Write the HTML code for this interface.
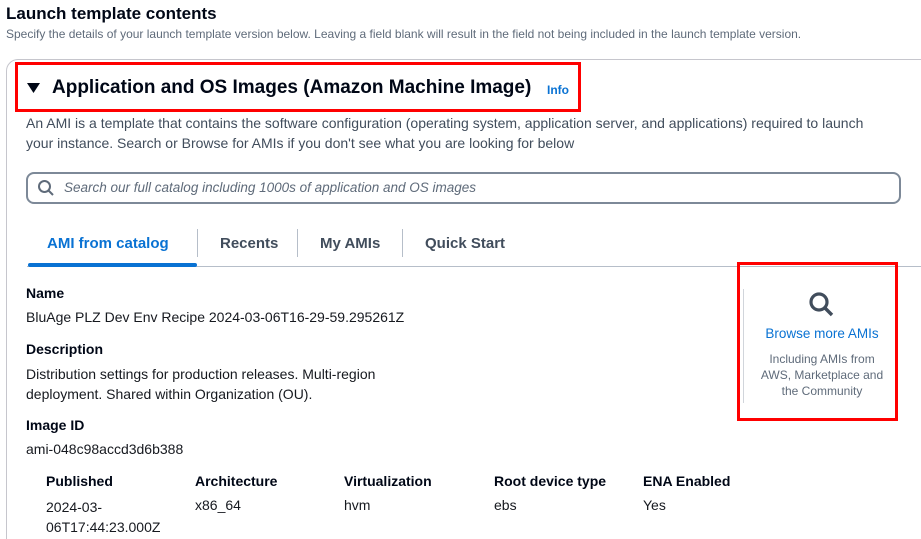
<!DOCTYPE html>
<html><head><meta charset="utf-8"><style>
*{margin:0;padding:0;box-sizing:border-box}
html,body{width:921px;height:539px;overflow:hidden}
body{background:#fff;font-family:"Liberation Sans",sans-serif;color:#000716;position:relative}
.a{position:absolute;white-space:nowrap}
.b{font-weight:bold;font-size:14px}
.v{font-size:14px;color:#16191f}
</style></head><body>
<div class="a" style="left:6px;top:4px;font-size:17px;font-weight:bold">Launch template contents</div>
<div class="a" style="left:6px;top:27px;font-size:12px;color:#5f6b7a">Specify the details of your launch template version below. Leaving a field blank will result in the field not being included in the launch template version.</div>
<div class="a" style="left:6px;top:59px;width:930px;height:500px;border:1px solid #c6c6cd;border-radius:12px"></div>
<div class="a" style="left:15px;top:62px;width:566px;height:50px;border:3px solid #ff0000"></div>
<svg class="a" style="left:27px;top:82px" width="14" height="12"><path d="M0 1h13L6.5 11z" fill="#000716"/></svg>
<div class="a" style="left:52px;top:77px;font-size:19px;font-weight:bold">Application and OS Images (Amazon Machine Image)</div>
<div class="a" style="left:547px;top:83px;font-size:12px;font-weight:bold;color:#0972d3">Info</div>
<div class="a" style="left:26px;top:113px;font-size:14px;line-height:20px;color:#414d5c">An AMI is a template that contains the software configuration (operating system, application server, and applications) required to launch<br>your instance. Search or Browse for AMIs if you don't see what you are looking for below</div>
<div class="a" style="left:26px;top:172px;width:875px;height:32px;border:2px solid #7d8998;border-radius:8px"></div>
<svg class="a" style="left:37px;top:179px" width="18" height="18"><circle cx="7.5" cy="7.5" r="5.5" fill="none" stroke="#5f6b7a" stroke-width="2"/><path d="M11.5 11.5l4.5 4.5" stroke="#5f6b7a" stroke-width="2"/></svg>
<div class="a" style="left:64px;top:180px;font-size:13.5px;font-style:italic;color:#5f6b7a">Search our full catalog including 1000s of application and OS images</div>
<div class="a" style="left:47px;top:235px;font-size:15px;font-weight:bold;color:#0972d3">AMI from catalog</div>
<div class="a" style="left:220px;top:235px;font-size:15px;font-weight:bold;color:#414d5c">Recents</div>
<div class="a" style="left:320px;top:235px;font-size:15px;font-weight:bold;color:#414d5c">My AMIs</div>
<div class="a" style="left:425px;top:235px;font-size:15px;font-weight:bold;color:#414d5c">Quick Start</div>
<div class="a" style="left:197px;top:229px;width:1px;height:28px;background:#b6bec9"></div>
<div class="a" style="left:297px;top:229px;width:1px;height:28px;background:#b6bec9"></div>
<div class="a" style="left:402px;top:229px;width:1px;height:28px;background:#b6bec9"></div>
<div class="a" style="left:27px;top:266px;width:894px;height:1px;background:#b6bec9"></div>
<div class="a" style="left:28px;top:263px;width:169px;height:4px;background:#0972d3;border-radius:2px"></div>
<div class="a b" style="left:26px;top:285px">Name</div>
<div class="a v" style="left:26px;top:309px">BluAge PLZ Dev Env Recipe 2024-03-06T16-29-59.295261Z</div>
<div class="a b" style="left:26px;top:341px">Description</div>
<div class="a v" style="left:26px;top:364px;line-height:20px">Distribution settings for production releases. Multi-region<br>deployment. Shared within Organization (OU).</div>
<div class="a b" style="left:26px;top:417px">Image ID</div>
<div class="a v" style="left:26px;top:441px">ami-048c98accd3d6b388</div>
<div class="a b" style="left:46px;top:473px">Published</div>
<div class="a b" style="left:195px;top:473px">Architecture</div>
<div class="a b" style="left:344px;top:473px">Virtualization</div>
<div class="a b" style="left:494px;top:473px">Root device type</div>
<div class="a b" style="left:643px;top:473px">ENA Enabled</div>
<div class="a v" style="left:46px;top:497px;line-height:20px">2024-03-<br>06T17:44:23.000Z</div>
<div class="a v" style="left:195px;top:497px">x86_64</div>
<div class="a v" style="left:344px;top:497px">hvm</div>
<div class="a v" style="left:494px;top:497px">ebs</div>
<div class="a v" style="left:643px;top:497px">Yes</div>
<div class="a" style="left:737px;top:262px;width:161px;height:159px;border:3px solid #ff0000"></div>
<div class="a" style="left:743px;top:289px;width:1px;height:114px;background:#d1d5db"></div>
<svg class="a" style="left:807px;top:290px" width="30" height="30"><circle cx="12" cy="12" r="8" fill="none" stroke="#414d5c" stroke-width="3.2"/><path d="M18 18l7 7" stroke="#414d5c" stroke-width="3.4"/></svg>
<div class="a" style="left:744px;top:326px;width:156px;text-align:center;font-size:13.5px;color:#0972d3">Browse more AMIs</div>
<div class="a" style="left:744px;top:351px;width:156px;text-align:center;font-size:12px;line-height:16px;color:#5f6b7a;white-space:normal">Including AMIs from<br>AWS, Marketplace and<br>the Community</div>
</body></html>
